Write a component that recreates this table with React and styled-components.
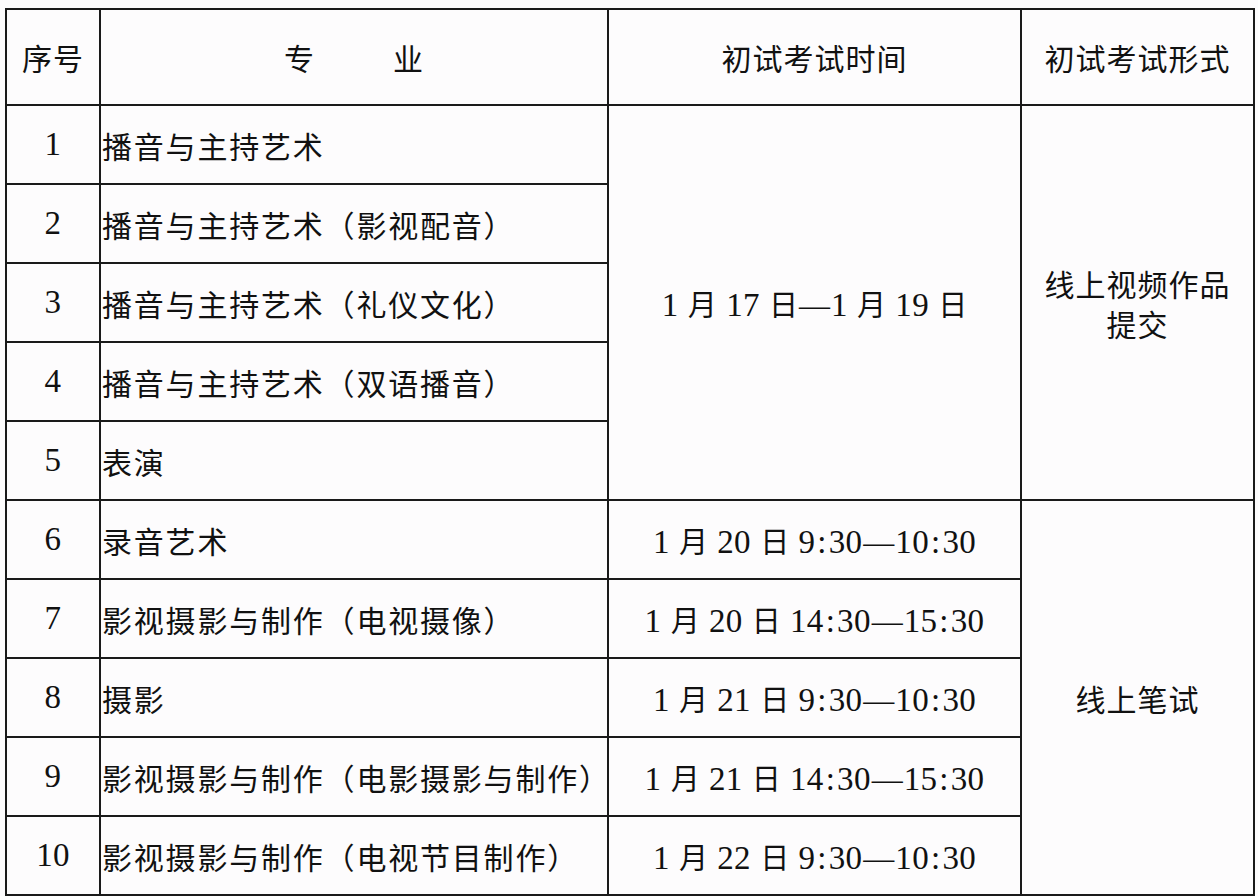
import styled, { createGlobalStyle } from "styled-components";

const Global = createGlobalStyle`
  html, body {
    margin: 0;
    background: #fdfcfd;
  }
  body {
    font-family: "Liberation Serif", "Noto Sans CJK SC", serif;
    color: #111;
  }
`

const Page = styled.div`
  padding: 8px 5px 3px 5px;
`

const Table = styled.table`
  border-collapse: collapse;
  width: 1248px;
  table-layout: fixed;
  border: 2px solid #1a1a1a;
`

const Col = styled.col`
  width: ${p => p.$w}px;
`

const Head = styled.th`
  height: 94px;
  border: 2px solid #1a1a1a;
  font-family: "Noto Sans CJK SC", sans-serif;
  font-weight: 400;
  font-size: 30px;
  letter-spacing: 1px;
  padding: 0;
  text-align: center;

  .gap {
    margin-right: 78px;
  }
`

const Cell = styled.td`
  height: 77px;
  border: 2px solid #1a1a1a;
  padding: 0;
  text-align: ${p => (p.$left ? "left" : "center")};
  padding-left: ${p => (p.$left ? "1px" : "0")};
  white-space: nowrap;
  font-family: ${p => (p.$left ? '"Noto Sans CJK SC", sans-serif' : '"Liberation Serif", "Noto Sans CJK SC", serif')};
  font-size: ${p => (p.$left ? "30px" : "29px")};
  letter-spacing: ${p => (p.$left ? "1.8px" : "0")};
  word-spacing: ${p => (p.$left ? "0" : "2px")};
`

const Format = styled(Cell)`
  font-family: "Noto Sans CJK SC", sans-serif;
  font-size: 30px;
  line-height: 40px;
  letter-spacing: 1px;
`

const Num = styled.span`
  font-family: "Liberation Serif", serif;
  font-size: 33px;
  letter-spacing: 0.3px;
`

const Colon = styled.span`
  margin: 0 2px;
`

const Dash = styled.span`
  font-family: "Liberation Serif", serif;
  font-size: 31px;
  margin: 0 1px;
`

// digits get the larger serif face, CJK stays in the CJK face
const Mixed = ({ text }) =>
  text.split(/(\d+(?::\d+)?|—)/).map((part, i) => {
    if (part === "—") return <Dash key={i}>—</Dash>
    if (/^\d/.test(part)) {
      const [a, b] = part.split(":")
      return (
        <Num key={i}>
          {a}
          {b && <><Colon>:</Colon>{b}</>}
        </Num>
      )
    }
    return part
  })

const rows = [
  ["1", "播音与主持艺术"],
  ["2", "播音与主持艺术（影视配音）"],
  ["3", "播音与主持艺术（礼仪文化）"],
  ["4", "播音与主持艺术（双语播音）"],
  ["5", "表演"],
  ["6", "录音艺术", "1 月 20 日 9:30—10:30"],
  ["7", "影视摄影与制作（电视摄像）", "1 月 20 日 14:30—15:30"],
  ["8", "摄影", "1 月 21 日 9:30—10:30"],
  ["9", "影视摄影与制作（电影摄影与制作）", "1 月 21 日 14:30—15:30"],
  ["10", "影视摄影与制作（电视节目制作）", "1 月 22 日 9:30—10:30"],
]

const App = () => {
  return (
    <Page>
      <Global />
      <Table>
        <colgroup>
          <Col $w={94} />
          <Col $w={508} />
          <Col $w={413} />
          <Col $w={233} />
        </colgroup>
        <thead>
          <tr>
            <Head>序号</Head>
            <Head><span className="gap">专</span>业</Head>
            <Head>初试考试时间</Head>
            <Head>初试考试形式</Head>
          </tr>
        </thead>
        <tbody>
          {rows.map(([n, name, time], i) => (
            <tr key={n}>
              <Cell><Num>{n}</Num></Cell>
              <Cell $left>{name}</Cell>
              {i === 0 && <Cell rowSpan={5}><Mixed text="1 月 17 日—1 月 19 日" /></Cell>}
              {i === 0 && <Format rowSpan={5}>线上视频作品<br />提交</Format>}
              {time && <Cell><Mixed text={time} /></Cell>}
              {i === 5 && <Format rowSpan={5}>线上笔试</Format>}
            </tr>
          ))}
        </tbody>
      </Table>
    </Page>
  )
}

export default App
